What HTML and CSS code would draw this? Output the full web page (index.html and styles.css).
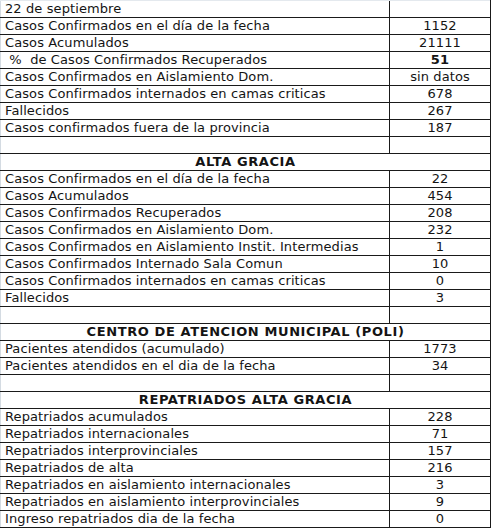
FILE: index.html
```html
<!DOCTYPE html>
<html lang="es">
<head>
<meta charset="utf-8">
<link rel="stylesheet" href="styles.css">
</head>
<body>
<table class="sheet">
  <tr class="first"><td class="lbl">22 de septiembre</td><td class="val"></td></tr>
  <tr><td class="lbl">Casos Confirmados en el día de la fecha</td><td class="val">1152</td></tr>
  <tr><td class="lbl">Casos Acumulados</td><td class="val">21111</td></tr>
  <tr><td class="lbl">&nbsp;%&nbsp; de Casos Confirmados Recuperados</td><td class="val bold">51</td></tr>
  <tr><td class="lbl">Casos Confirmados en Aislamiento Dom.</td><td class="val">sin datos</td></tr>
  <tr><td class="lbl">Casos Confirmados internados en camas criticas</td><td class="val">678</td></tr>
  <tr><td class="lbl">Fallecidos</td><td class="val">267</td></tr>
  <tr><td class="lbl">Casos confirmados fuera de la provincia</td><td class="val">187</td></tr>
  <tr><td class="lbl"></td><td class="val"></td></tr>
  <tr><td class="head" colspan="2">ALTA GRACIA</td></tr>
  <tr><td class="lbl">Casos Confirmados en el día de la fecha</td><td class="val">22</td></tr>
  <tr><td class="lbl">Casos Acumulados</td><td class="val">454</td></tr>
  <tr><td class="lbl">Casos Confirmados Recuperados</td><td class="val">208</td></tr>
  <tr><td class="lbl">Casos Confirmados en Aislamiento Dom.</td><td class="val">232</td></tr>
  <tr><td class="lbl">Casos Confirmados en Aislamiento Instit. Intermedias</td><td class="val">1</td></tr>
  <tr><td class="lbl">Casos Confirmados Internado Sala Comun</td><td class="val">10</td></tr>
  <tr><td class="lbl">Casos Confirmados internados en camas criticas</td><td class="val">0</td></tr>
  <tr><td class="lbl">Fallecidos</td><td class="val">3</td></tr>
  <tr><td class="lbl"></td><td class="val"></td></tr>
  <tr><td class="head" colspan="2">CENTRO DE ATENCION MUNICIPAL (POLI)</td></tr>
  <tr><td class="lbl">Pacientes atendidos (acumulado)</td><td class="val">1773</td></tr>
  <tr><td class="lbl">Pacientes atendidos en el dia de la fecha</td><td class="val">34</td></tr>
  <tr><td class="lbl"></td><td class="val"></td></tr>
  <tr><td class="head" colspan="2">REPATRIADOS ALTA GRACIA</td></tr>
  <tr><td class="lbl">Repatriados acumulados</td><td class="val">228</td></tr>
  <tr><td class="lbl">Repatriados internacionales</td><td class="val">71</td></tr>
  <tr><td class="lbl">Repatriados interprovinciales</td><td class="val">157</td></tr>
  <tr><td class="lbl">Repatriados de alta</td><td class="val">216</td></tr>
  <tr><td class="lbl">Repatriados en aislamiento internacionales</td><td class="val">3</td></tr>
  <tr><td class="lbl">Repatriados en aislamiento interprovinciales</td><td class="val">9</td></tr>
  <tr><td class="lbl">Ingreso repatriados dia de la fecha</td><td class="val">0</td></tr>
</table>
</body>
</html>
```
FILE: styles.css
```css
html, body {
  margin: 0;
  padding: 0;
  background: #ffffff;
}
body {
  font-family: "DejaVu Sans", "Liberation Sans", sans-serif;
  font-size: 13px;
  letter-spacing: 0.1px;
  color: #141414;
}
.sheet {
  border-collapse: collapse;
  width: 491px;
  table-layout: fixed;
}
.sheet td {
  height: 16px;
  padding: 0;
  line-height: 16px;
  border-bottom: 1px solid #1a1a1a;
  white-space: nowrap;
  overflow: hidden;
}
.sheet .lbl {
  width: 384px;
  padding-left: 4px;
  border-left: 1px solid #d4dbe2;
}
.sheet .val {
  width: 100px;
  text-align: center;
  border-left: 1px solid #1a1a1a;
  border-right: 1px solid #1a1a1a;
}
.sheet .bold {
  font-weight: bold;
}
.sheet .head {
  text-align: center;
  font-weight: bold;
  letter-spacing: 0.6px;
  border-left: 1px solid #d4dbe2;
  border-right: 1px solid #1a1a1a;
}
.sheet .first td {
  border-top: 1px solid #e4e9ee;
}
```
